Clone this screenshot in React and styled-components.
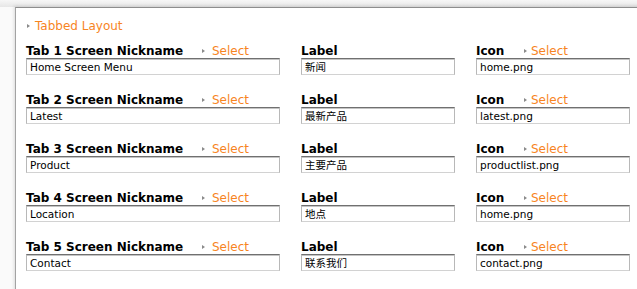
import React from "react";
import styled, { createGlobalStyle } from "styled-components";

const GlobalStyle = createGlobalStyle`
  html, body {
    margin: 0;
    padding: 0;
    overflow: hidden;
  }
  body {
    background: linear-gradient(to bottom, #f7f7f7 0, #e6e6e6 7px, #fafafa 7px);
  }
`;

const Page = styled.div`
  width: 637px;
  height: 289px;
  padding: 7px 0 0 15px;
  box-sizing: border-box;
  overflow: hidden;
`;

const Panel = styled.div`
  background: #fff;
  border-top: 1px solid #8d8d8d;
  border-left: 1px solid #a3a3a3;
  box-shadow: -1px -1px 3px rgba(0, 0, 0, 0.12);
  width: 700px;
  height: 320px;
  padding: 9px 0 0 10px;
  box-sizing: border-box;
  font-family: "DejaVu Sans", Verdana, sans-serif;
`;

const Arrow = styled.span`
  display: inline-block;
  width: 0;
  height: 0;
  border-top: 2.5px solid transparent;
  border-bottom: 2.5px solid transparent;
  border-left: 3px solid #8a8a8a;
  margin-right: ${(p) => p.gap || 5}px;
  vertical-align: middle;
`;

const Link = styled.span`
  color: #f7851f;
  font-size: 12px;
`;

const Title = styled.div`
  height: 15px;
  line-height: 15px;
  margin-left: 1px;
  margin-bottom: 12px;
`;

const Grid = styled.div`
  display: grid;
  grid-template-columns: 254px 154px 154px;
  column-gap: 21px;
  row-gap: 18px;
`;

const Field = styled.div`
  display: flex;
  flex-direction: column;
`;

const Header = styled.div`
  display: flex;
  align-items: center;
  height: 14px;
  line-height: 14px;
`;

const Name = styled.span`
  font-weight: bold;
  font-size: 12px;
  color: #000;
  width: ${(p) => p.w || "auto"};
`;

const Input = styled.input`
  box-sizing: border-box;
  width: 100%;
  height: 17px;
  margin: 0;
  padding: 0 3px;
  border: 1px solid;
  border-color: #707070 #b8b8b8 #d2d2d2 #b8b8b8;
  box-shadow: inset 0 1px 0 #c4c4c4;
  font-family: "DejaVu Sans", "Noto Sans CJK SC", sans-serif;
  font-size: 10.5px;
  color: #000;
  background: #fff;
  outline: none;
`;

const rows = [
  ["Home Screen Menu", "新闻", "home.png"],
  ["Latest", "最新产品", "latest.png"],
  ["Product", "主要产品", "productlist.png"],
  ["Location", "地点", "home.png"],
  ["Contact", "联系我们", "contact.png"],
];

export default function App() {
  return (
    <>
      <GlobalStyle />
      <Page>
        <Panel>
          <Title>
            <Arrow />
            <Link>Tabbed Layout</Link>
          </Title>
          <Grid>
            {rows.map(([nick, label, icon], i) => (
              <React.Fragment key={i}>
                <Field>
                  <Header>
                    <Name w="176px">Tab {i + 1} Screen Nickname</Name>
                    <Arrow gap={7} />
                    <Link>Select</Link>
                  </Header>
                  <Input readOnly value={nick} />
                </Field>
                <Field>
                  <Header>
                    <Name>Label</Name>
                  </Header>
                  <Input readOnly value={label} />
                </Field>
                <Field>
                  <Header>
                    <Name w="48px">Icon</Name>
                    <Arrow gap={4} />
                    <Link>Select</Link>
                  </Header>
                  <Input readOnly value={icon} />
                </Field>
              </React.Fragment>
            ))}
          </Grid>
        </Panel>
      </Page>
    </>
  );
}
